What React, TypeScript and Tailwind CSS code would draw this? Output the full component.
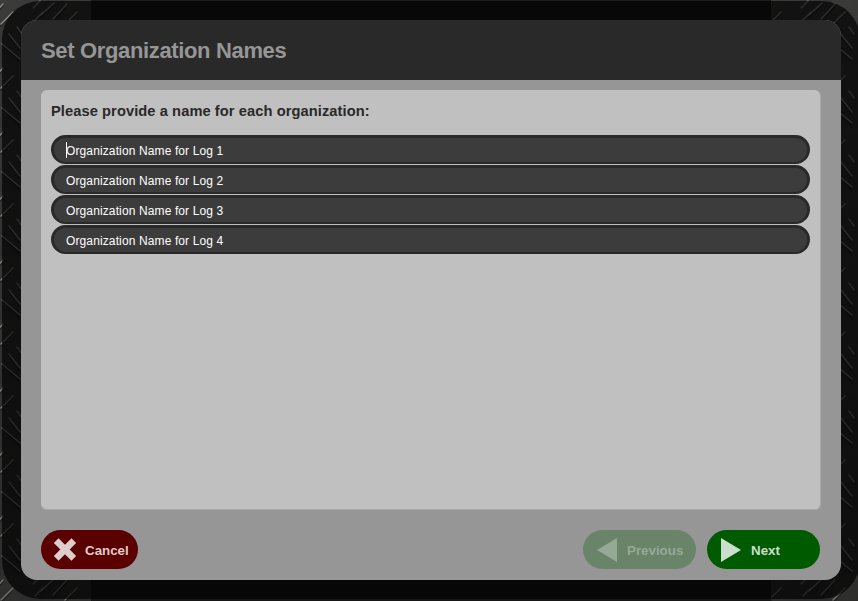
import React from "react";

const logs = [1, 2, 3, 4];

function Plate() {
  return (
    <svg className="absolute inset-0" width="858" height="601" aria-hidden="true">
      <defs>
        <linearGradient id="base" x1="0" y1="0" x2="1" y2="1">
          <stop offset="0" stopColor="#3c3c3b" />
          <stop offset="0.5" stopColor="#363636" />
          <stop offset="1" stopColor="#3a3a39" />
        </linearGradient>
        <linearGradient id="shade" x1="0" y1="0" x2="0" y2="1">
          <stop offset="0" stopColor="#000" stopOpacity="0" />
          <stop offset="1" stopColor="#000" stopOpacity="0.2" />
        </linearGradient>
        <pattern id="tread" width="64" height="64" patternUnits="userSpaceOnUse">
          <rect width="64" height="64" fill="url(#base)" />
          <g stroke="#2a2a2a" strokeWidth="2.5" strokeLinecap="round" fill="none">
            <path d="M1 26 12 14M3 46 19 61M10 36 19 50M54 21 67 5M-10 21 3 5M42 17 54 5M18 29 23 36" />
          </g>
          <g stroke="#8e8e88" strokeWidth="1.4" strokeLinecap="round" fill="none">
            <path d="M1 24 13 12M2 44 20 59M9 34 20 48M53 19 67 4M-11 19 3 4M41 15 54 3M17 27 22 34M33 8 40 1M35 20 43 12" />
          </g>
        </pattern>
      </defs>
      <rect width="858" height="601" fill="url(#tread)" />
      <rect x="91" width="680" height="601" fill="#1b1b1b" />
      <rect width="858" height="601" fill="url(#shade)" />
      <rect x="2" y="1" width="858" height="598" rx="38" fill="#000" fillOpacity="0.68" />
    </svg>
  );
}

export default function App() {
  return (
    <div className="relative h-[601px] w-[858px] overflow-hidden bg-[#242424] font-['Liberation_Sans',Arial,sans-serif]">
      <Plate />
      <div className="relative px-[21px] pt-5">
        <main className="h-[560px] w-[820px] overflow-hidden rounded-2xl bg-[#969696]">
          <header className="flex h-[60px] items-center bg-[#292929] px-5 pt-0.5">
            <h1 className="text-[22px] leading-none font-bold tracking-[-0.35px] text-[#969696]">Set Organization Names</h1>
          </header>
          <div className="px-5 pt-[10px]">
            <section className="h-[420px] w-[780px] rounded-md border-r border-b border-[#aaaaaa] bg-[#c0c0c0] px-[10px] pt-3">
              <h2 className="h-[33px] text-[14.67px] leading-[18px] font-bold tracking-[0.08px] text-[#292929]">
                Please provide a name for each organization:
              </h2>
              <div className="flex flex-col gap-px">
                {logs.map((n) => (
                  <div
                    key={n}
                    className="flex h-[29px] w-[759px] items-center rounded-full border-t-[3px] border-r-[3px] border-b-2 border-l-[3px] border-[#292929] bg-[#3c3c3c] pl-3 text-[12px] tracking-[0.12px] text-white"
                  >
                    {n === 1 && <span className="-mr-px h-4 w-px bg-white" />}
                    <span className="pt-[2px]">Organization Name for Log {n}</span>
                  </div>
                ))}
              </div>
            </section>
            <footer className="flex w-[779px] items-center pt-5 text-[13.33px] font-bold">
              <button className="flex h-[39px] w-[97px] items-center rounded-full bg-[#5a0000] pl-3 text-[#dfcccc]">
                <svg width="24" height="24" viewBox="0 0 24 24">
                  <path d="M3.2 2.7 20.8 20.3M20.8 2.7 3.2 20.3" stroke="currentColor" strokeWidth="6.6" />
                </svg>
                <span className="ml-2 pt-0.5">Cancel</span>
              </button>
              <button className="ml-auto flex h-[39px] w-[113px] items-center rounded-full bg-[#698469] pl-[14px] text-[#96a996]">
                <svg width="20" height="24" viewBox="0 0 20 24">
                  <path d="M20 0V24L0 12Z" fill="currentColor" />
                </svg>
                <span className="ml-[10px] pt-0.5">Previous</span>
              </button>
              <button className="ml-[11px] flex h-[39px] w-[113px] items-center rounded-full bg-[#005a00] pl-[14px] text-[#ccdfcc]">
                <svg width="20" height="24" viewBox="0 0 20 24">
                  <path d="M0 0V24L20 12Z" fill="currentColor" />
                </svg>
                <span className="ml-[10px] pt-0.5">Next</span>
              </button>
            </footer>
          </div>
        </main>
      </div>
    </div>
  );
}
